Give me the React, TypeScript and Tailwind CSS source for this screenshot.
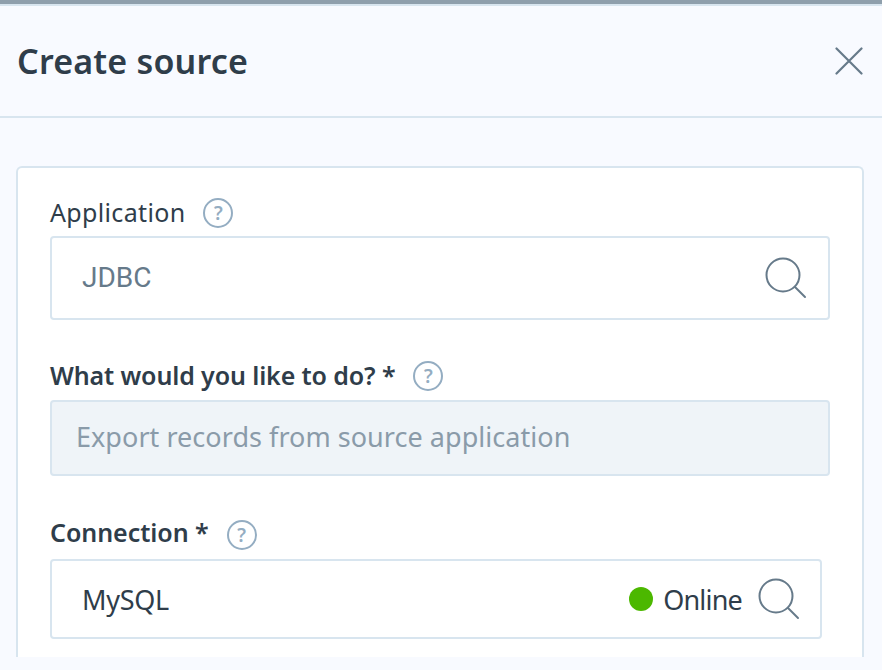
import React from "react";

const sans = "font-['Noto_Sans',sans-serif]";

function Help({ top }: { top: string }) {
  return (
    <span className={`flex h-[30px] w-[30px] shrink-0 items-center justify-center rounded-full border-2 border-[#94adc2] text-[19px] font-semibold leading-none text-[#94adc2] ${top}`}>
      ?
    </span>
  );
}

function SearchIcon() {
  return (
    <svg width="42" height="42" viewBox="0 0 42 42" fill="none" stroke="#667a8a" strokeWidth="2" className="shrink-0">
      <circle cx="18" cy="18" r="16.5" />
      <path d="M30 30 L40 40" strokeLinecap="round" />
    </svg>
  );
}

export default function App() {
  return (
    <div className={`flex h-[670px] w-[882px] flex-col overflow-hidden bg-[#f8faff] ${sans}`}>
      <div className="h-1 shrink-0 bg-[#8f9fac]" />
      <div className="h-0.5 shrink-0 bg-[#d8e5ef]" />
      <header className="flex h-[112px] shrink-0 items-center justify-between border-b-2 border-[#d8e5ef] pl-[17px] pr-[19px]">
        <h1 className="text-[34px] font-semibold leading-none tracking-[0.2px] text-[#2f3d4a]">Create source</h1>
        <svg width="28" height="28" viewBox="0 0 28 28" stroke="#667a8a" strokeWidth="2.2" strokeLinecap="round">
          <path d="M1.5 1.5 L26.5 26.5 M26.5 1.5 L1.5 26.5" />
        </svg>
      </header>
      <main className="ml-4 mr-[18px] mt-12 h-[491px] shrink-0 overflow-hidden rounded-t-md border-x-2 border-t-2 border-[#d8e5ef] bg-white px-8 pt-[29px]">
        <div className="flex h-[39px] items-start gap-[18px] text-[#2f3d4a]">
          <span className="text-[25px] leading-[30px] tracking-[0.34px]">Application</span>
          <Help top="mt-px" />
        </div>
        <div className="flex h-[84px] items-center justify-between rounded border-2 border-[#d8e5ef] pl-[30px] pr-[21px]">
          <span className="font-['Roboto',sans-serif] text-[28px] text-[#667a8a]">JDBC</span>
          <SearchIcon />
        </div>

        <div className="mt-[39px] flex h-[41px] items-start gap-[18px] text-[#2f3d4a]">
          <span className="text-[25px] font-semibold leading-[32px] tracking-[-0.12px]">What would you like to do? *</span>
          <Help top="mt-0.5" />
        </div>
        <div className="flex h-[76px] items-center rounded border-2 border-[#d8e5ef] bg-[#eff4f8] pb-0.5 pl-6 text-[27px] tracking-[0.04px] text-[#8a9ba9]">
          Export records from source application
        </div>

        <div className="mt-10 flex h-[43px] items-start gap-[18px] text-[#2f3d4a]">
          <span className="text-[25px] font-semibold leading-[32px] tracking-[-0.05px]">Connection *</span>
          <Help top="mt-1" />
        </div>
        <div className="mr-2 flex h-20 items-center justify-between rounded border-2 border-[#d8e5ef] pl-[30px] pr-5">
          <span className="mt-0.5 text-[27px] tracking-[-0.3px] text-[#2f3d4a]">MySQL</span>
          <div className="flex items-center">
            <span className="h-6 w-6 rounded-full bg-[#4cb800]" />
            <span className="ml-2.5 mr-4 mt-0.5 text-[27px] tracking-[-0.8px] text-[#2f3d4a]">Online</span>
            <SearchIcon />
          </div>
        </div>
      </main>
    </div>
  );
}
